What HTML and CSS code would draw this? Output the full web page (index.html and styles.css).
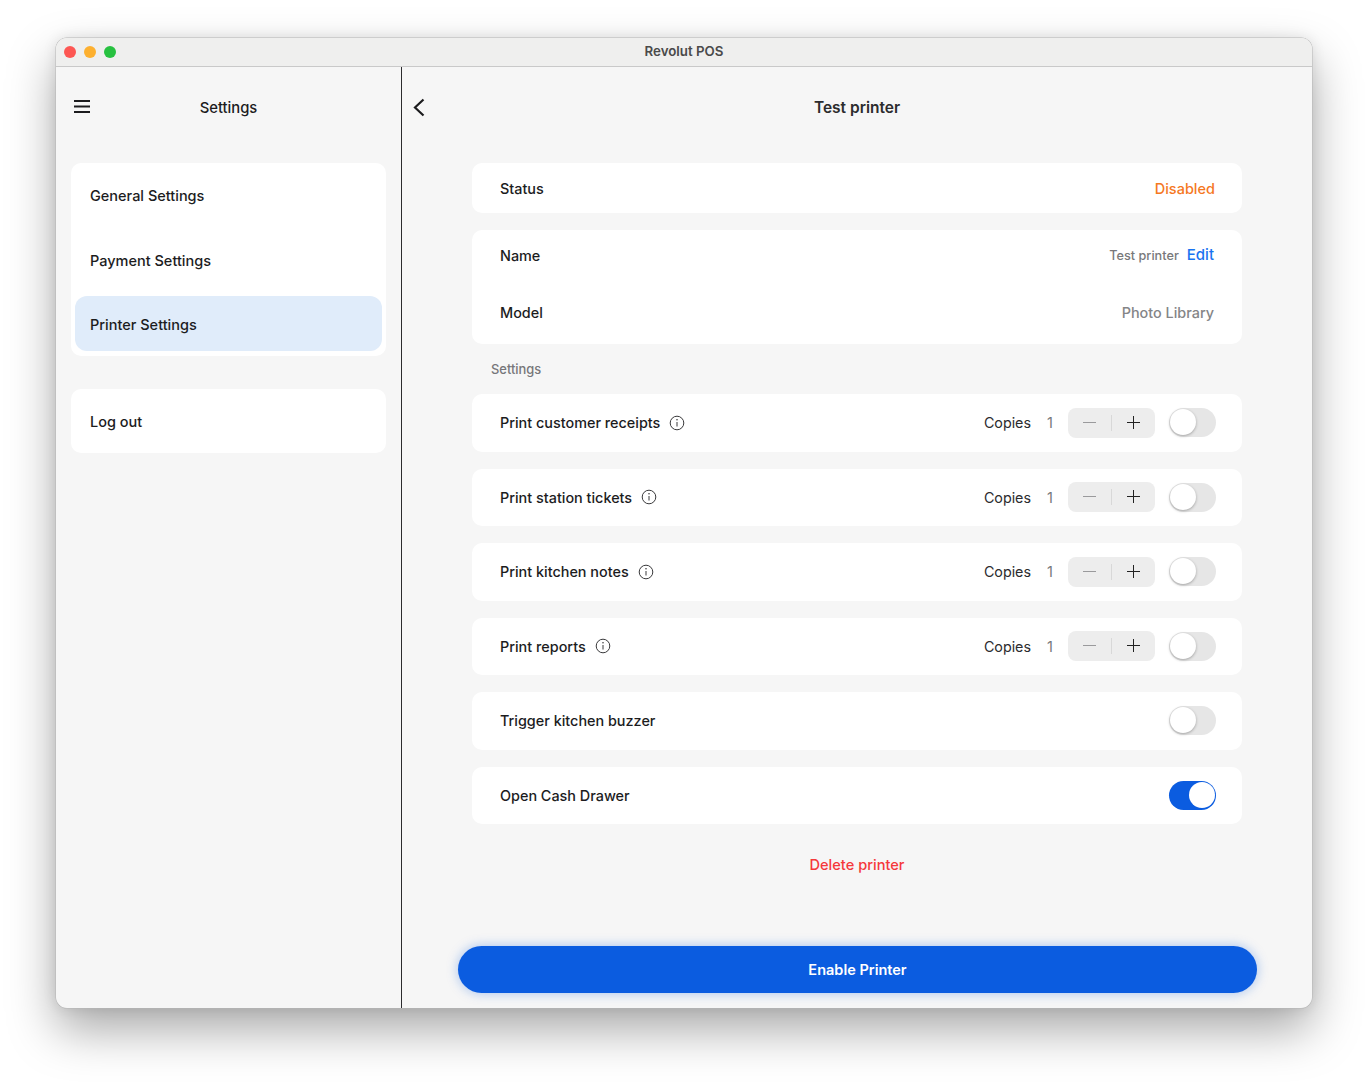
FILE: index.html
```html
<!DOCTYPE html>
<html lang="en">
<head>
  <meta charset="UTF-8">
  <title>Revolut POS</title>
  <link rel="stylesheet" href="styles.css">
</head>
<body>
  <div class="window">
    <div class="titlebar">
      <div class="traffic">
        <span class="dot dot-red"></span>
        <span class="dot dot-yellow"></span>
        <span class="dot dot-green"></span>
      </div>
      <span class="window-title">Revolut POS</span>
    </div>

    <div class="app">
      <!-- Left column -->
      <aside class="sidebar">
        <header class="side-header">
          <svg class="menu-icon" width="16" height="13" viewBox="0 0 16 13"><path d="M0 1h16M0 6.500h16M0 12h16" stroke="#1c1c1e" stroke-width="2" fill="none"/></svg>
          <span class="side-title">Settings</span>
        </header>
        <nav class="side-card">
          <a class="side-item">General Settings</a>
          <a class="side-item">Payment Settings</a>
          <a class="side-item active">Printer Settings</a>
        </nav>
        <div class="side-card logout">
          <a class="side-item">Log out</a>
        </div>
      </aside>

      <!-- Printer detail -->
      <main class="detail">
        <header class="detail-header">
          <svg class="back-icon" width="12" height="19" viewBox="0 0 12 19"><path d="M10.500 1.500 2 9.500l8.500 8" stroke="#1c1c1e" stroke-width="2.200" fill="none"/></svg>
          <span class="detail-title">Test printer</span>
        </header>

        <div class="content">
          <section class="card card-status">
            <span class="label">Status</span>
            <span class="status-value">Disabled</span>
          </section>

          <section class="card card-info">
            <div class="info-row">
              <span class="label">Name</span>
              <span class="info-value"><span class="small-grey">Test printer</span><a class="edit">Edit</a></span>
            </div>
            <div class="info-row">
              <span class="label">Model</span>
              <span class="grey">Photo Library</span>
            </div>
          </section>

          <div class="section-label">Settings</div>

          <div class="rows">
            <section class="card row">
              <span class="label">Print customer receipts</span>
              <svg class="info" width="16" height="16" viewBox="0 0 16 16"><circle cx="8" cy="8" r="6.800" fill="none" stroke="#3a3a3c"/><path d="M8 7v4.500" stroke="#3a3a3c"/><circle cx="8" cy="4.800" r=".8" fill="#3a3a3c"/></svg>
              <span class="copies">Copies</span><span class="count">1</span>
              <div class="stepper">
                <span class="step minus"></span><span class="step-line"></span><span class="step plus"></span>
              </div>
              <span class="toggle"></span>
            </section>
            <section class="card row">
              <span class="label">Print station tickets</span>
              <svg class="info" width="16" height="16" viewBox="0 0 16 16"><circle cx="8" cy="8" r="6.800" fill="none" stroke="#3a3a3c"/><path d="M8 7v4.500" stroke="#3a3a3c"/><circle cx="8" cy="4.800" r=".8" fill="#3a3a3c"/></svg>
              <span class="copies">Copies</span><span class="count">1</span>
              <div class="stepper">
                <span class="step minus"></span><span class="step-line"></span><span class="step plus"></span>
              </div>
              <span class="toggle"></span>
            </section>
            <section class="card row">
              <span class="label">Print kitchen notes</span>
              <svg class="info" width="16" height="16" viewBox="0 0 16 16"><circle cx="8" cy="8" r="6.800" fill="none" stroke="#3a3a3c"/><path d="M8 7v4.500" stroke="#3a3a3c"/><circle cx="8" cy="4.800" r=".8" fill="#3a3a3c"/></svg>
              <span class="copies">Copies</span><span class="count">1</span>
              <div class="stepper">
                <span class="step minus"></span><span class="step-line"></span><span class="step plus"></span>
              </div>
              <span class="toggle"></span>
            </section>
            <section class="card row">
              <span class="label">Print reports</span>
              <svg class="info" width="16" height="16" viewBox="0 0 16 16"><circle cx="8" cy="8" r="6.800" fill="none" stroke="#3a3a3c"/><path d="M8 7v4.500" stroke="#3a3a3c"/><circle cx="8" cy="4.800" r=".8" fill="#3a3a3c"/></svg>
              <span class="copies">Copies</span><span class="count">1</span>
              <div class="stepper">
                <span class="step minus"></span><span class="step-line"></span><span class="step plus"></span>
              </div>
              <span class="toggle"></span>
            </section>
            <section class="card row">
              <span class="label">Trigger kitchen buzzer</span>
              <span class="toggle push"></span>
            </section>
            <section class="card row">
              <span class="label">Open Cash Drawer</span>
              <span class="toggle push on"></span>
            </section>
          </div>

          <a class="delete">Delete printer</a>
        </div>

        <button class="enable" type="button">Enable Printer</button>
      </main>
    </div>
  </div>
</body>
</html>
```

FILE: styles.css
```css
* {
  box-sizing: border-box;
}
body {
  margin: 0;
  height: 1082px;
  padding: 38px 56px 0;
  background: #fff;
  font-family: Inter, "Liberation Sans", sans-serif;
  color: #1c1c1e;
  overflow: hidden;
}
.window {
  height: 970px;
  border-radius: 11px;
  background: #f6f6f6;
  overflow: hidden;
  display: flex;
  flex-direction: column;
  box-shadow: 0 0 0 0.5px #b5b5b5, 0 22px 48px rgba(0,0,0,0.34), 0 0 14px rgba(0,0,0,0.1);
}

/* title bar */
.titlebar {
  height: 29px;
  flex: none;
  display: flex;
  align-items: center;
  justify-content: center;
  padding-bottom: 2px;
  position: relative;
  background: #efefee;
  border-bottom: 1px solid #c9c9c9;
}
.traffic {
  position: absolute;
  left: 8px;
  top: 8px;
  display: flex;
  gap: 8px;
}
.dot {
  width: 12px;
  height: 12px;
  border-radius: 50%;
}
.dot-red { background: #fd5753; }
.dot-yellow { background: #fdb02f; }
.dot-green { background: #27c140; }
.window-title {
  font-size: 13.300px;
  font-weight: 600;
  color: #4a4a4a;
}

.app {
  flex: 1;
  display: flex;
  min-height: 0;
}

/* sidebar */
.sidebar {
  width: 346px;
  flex: none;
  padding: 0 15px;
  border-right: 1px solid #2c2c2e;
}
.side-header {
  height: 96px;
  padding-bottom: 15px;
  display: flex;
  align-items: center;
  justify-content: center;
  position: relative;
}
.menu-icon {
  position: absolute;
  left: 3px;
  top: 33px;
}
.side-title {
  font-size: 14.800px;
  font-weight: 500;
}
.side-card {
  background: #fff;
  border-radius: 10px;
  padding: 0 4px 5px;
}
.side-item {
  display: flex;
  align-items: center;
  height: 64.500px;
  padding: 1px 0 0 15px;
  font-size: 14.500px;
  font-weight: 500;
}
.side-item.active {
  height: 55px;
  margin-top: 4px;
  padding-top: 2px;
  background: #e0ecfa;
  border-radius: 12px;
}
.logout {
  margin-top: 33px;
  padding-bottom: 0;
}
.logout .side-item {
  height: 64px;
}

/* main column */
.detail {
  flex: 1;
  position: relative;
  min-width: 0;
}
.detail-header {
  height: 96px;
  padding-bottom: 15px;
  display: flex;
  align-items: center;
  justify-content: center;
  position: relative;
}
.back-icon {
  position: absolute;
  left: 11px;
  top: 31px;
}
.detail-title {
  font-size: 15.500px;
  font-weight: 600;
  color: #2c2c2e;
}
.content {
  width: 770px;
  margin: 0 auto;
  display: flex;
  flex-direction: column;
}
.card {
  background: #fff;
  border-radius: 10px;
  display: flex;
  align-items: center;
  padding: 0 27px 0 28px;
}
.label {
  font-size: 14.400px;
  font-weight: 500;
}
.card-status {
  height: 50px;
  justify-content: space-between;
}
.status-value {
  font-size: 14.500px;
  font-weight: 500;
  color: #f5781f;
}
.card-info {
  margin-top: 17px;
  height: 114px;
  flex-direction: column;
  align-items: stretch;
  padding-right: 28px;
}
.info-row {
  display: flex;
  align-items: center;
  justify-content: space-between;
}
.info-row:first-child {
  height: 51px;
}
.info-row:last-child {
  height: 63px;
}
.info-value {
  display: flex;
  align-items: center;
  gap: 8px;
}
.small-grey {
  font-size: 12.700px;
  font-weight: 500;
  color: #78787a;
}
.edit {
  font-size: 15px;
  font-weight: 500;
  color: #1a73f0;
  margin-bottom: 2px;
}
.grey {
  font-size: 14.400px;
  font-weight: 500;
  color: #858587;
}
.section-label {
  height: 50px;
  padding-left: 19px;
  display: flex;
  align-items: center;
  font-size: 12.900px;
  font-weight: 500;
  color: #76767a;
}
.rows {
  display: flex;
  flex-direction: column;
  gap: 17px;
}
.row {
  height: 57.500px;
  padding-right: 26px;
}
.info {
  margin-left: 9px;
}
.copies {
  margin-left: auto;
  font-size: 14.300px;
  color: #2c2c2e;
}
.count {
  width: 37px;
  padding-right: 15px;
  text-align: right;
  font-size: 14.500px;
  color: #77777a;
}

/* stepper */
.stepper {
  width: 87px;
  height: 30px;
  margin-right: 14px;
  background: #ededed;
  border-radius: 8px;
  display: flex;
  align-items: center;
}
.step {
  flex: 1;
  height: 14px;
  position: relative;
}
.step::before,
.plus::after {
  content: "";
  position: absolute;
  left: 50%;
  top: 50%;
  width: 13px;
  height: 1px;
  margin: -1px 0 0 -7px;
  background: #9a9a9c;
}
.plus::before {
  background: #222;
}
.plus::after {
  width: 1px;
  height: 13px;
  margin: -7px 0 0 -1px;
  background: #222;
}
.step-line {
  width: 1px;
  height: 16px;
  background: #d8d8d8;
}

/* toggle */
.toggle {
  width: 47px;
  height: 29px;
  border-radius: 15px;
  background: #e6e6e6;
  position: relative;
  flex: none;
}
.toggle::after {
  content: "";
  position: absolute;
  left: 1px;
  top: 1px;
  width: 26px;
  height: 26px;
  border-radius: 50%;
  background: #fff;
  box-shadow: 0 1px 3px rgba(0,0,0,0.3);
}
.toggle.push {
  margin-left: auto;
}
.toggle.on {
  background: #0b5ce0;
}
.toggle.on::after {
  left: 20px;
  box-shadow: none;
}

.delete {
  margin-top: 32px;
  text-align: center;
  font-size: 14.600px;
  font-weight: 500;
  color: #f5383b;
}
.enable {
  position: absolute;
  left: 56px;
  top: 879px;
  width: 799px;
  height: 47px;
  border: none;
  border-radius: 24px;
  background: #0b5ce0;
  color: #fff;
  font-family: inherit;
  font-size: 14.500px;
  font-weight: 600;
  box-shadow: 0 0 12px rgba(11,92,224,0.35);
}
```
